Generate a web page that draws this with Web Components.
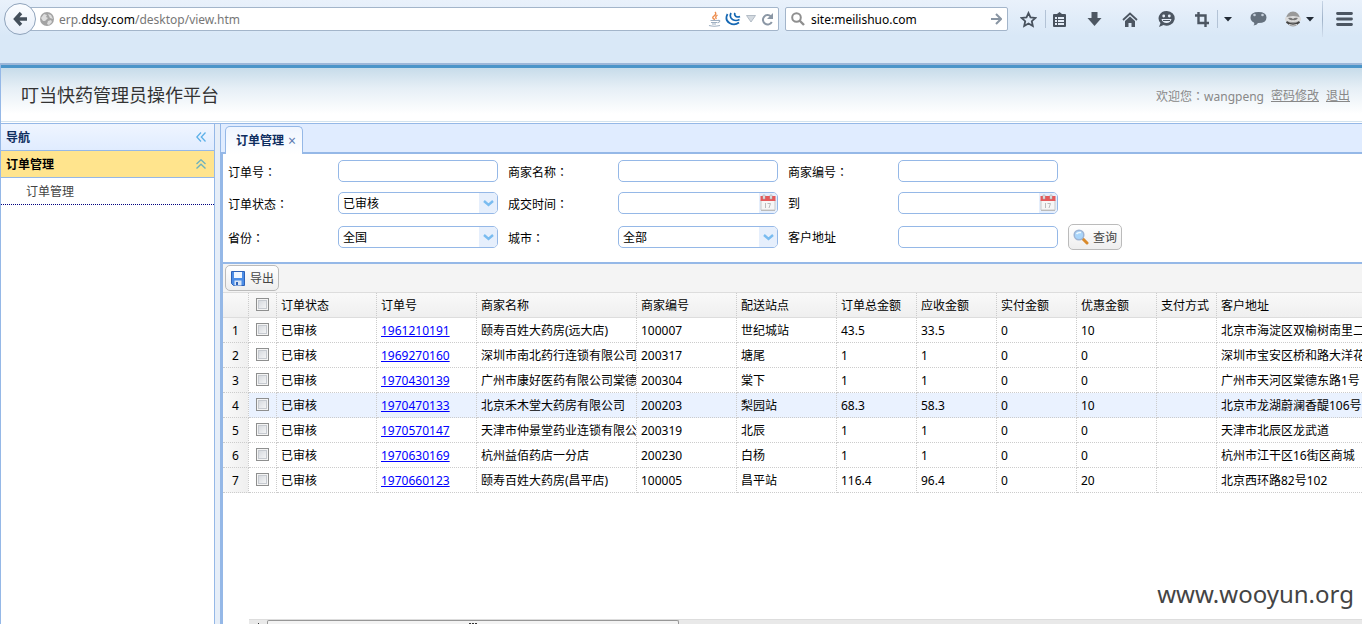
<!DOCTYPE html>
<html lang="zh-CN">
<head>
<meta charset="utf-8">
<title>叮当快药管理员操作平台</title>
<style>
html, body { height: 100%; margin: 0; }
body {
  font: 12px/16px "Noto Sans", "Noto Sans CJK SC", sans-serif;
  color: #000;
  background: #fff;
  overflow: hidden;
  --line: #95b8e7;
}
</style>
</head>
<body>
<desktop-page>
  <browser-bar slot="browser"></browser-bar>
  <page-header slot="header" heading="叮当快药管理员操作平台" user="wangpeng"></page-header>
  <nav-panel slot="nav"></nav-panel>
  <tab-panel slot="main" label="订单管理">
    <order-search></order-search>
    <order-grid></order-grid>
  </tab-panel>
  <site-mark slot="mark">www.wooyun.org</site-mark>
</desktop-page>

<script>
const define = (name, render) => customElements.define(name, class extends HTMLElement {
  connectedCallback() {
    if (this.shadowRoot) return;
    this.attachShadow({ mode: 'open' }).innerHTML = render(this);
  }
});

/* Shell: browser bar, header, sidebar and main column */
define('desktop-page', () => `
<style>
  :host { display: flex; flex-direction: column; height: 100vh; position: relative; overflow: hidden; }
  .app { flex: 1; min-height: 0; display: flex; flex-direction: column; border-left: 1px solid var(--line); }
  .body { flex: 1; min-height: 0; display: grid; grid-template-columns: 213px 7px minmax(0, 1fr); border-top: 1px solid var(--line); }
  .split { background: #e6eef8; border: solid var(--line); border-width: 0 1px; box-sizing: border-box; }
</style>
<slot name="browser"></slot>
<div class="app">
  <slot name="header"></slot>
  <div class="body"><slot name="nav"></slot><div class="split"></div><slot name="main"></slot></div>
</div>
<slot name="mark"></slot>`);

const ICONS = {
  back: '<svg width="14" height="16" viewBox="0 0 14 16"><path d="M8 2 2.5 8 8 14M3 8h11" fill="none" stroke="#444f5b" stroke-width="3.4"/></svg>',
  globe: '<svg width="14" height="14" viewBox="0 0 14 14"><circle cx="7" cy="7" r="7" fill="#a3a3a3"/><path d="M1 6 4 2l3 1-1 2 2 1-3 3-2 0zM8 2l3 1 2 4-3-1zM8 9l3-1 1 2-3 3-2-1z" fill="#ddd"/></svg>',
  java: '<svg width="14" height="16" viewBox="0 0 14 16"><path d="M7 1q2 2-1 4t1 3.5M9.5 4q-3 2-1 4" fill="none" stroke="#ed8c4c" stroke-width="1.4"/><path d="M2.500 9.500h7M3 11.500h6M4 13h4M9.500 9.500q3-.5 2 1t-2 1M1 14.500q5 1.500 11 0" fill="none" stroke="#9fb0c2" stroke-width="1.200"/></svg>',
  swirl: '<svg width="16" height="14" viewBox="0 0 16 14"><path d="M2.500 2q-3 6 2 9 5 3 9.500-.5M6 1Q4 5 7.500 7.500q3.500 2 7 0M10 1Q9 3 11 4.500q2 1 4 0" fill="none" stroke="#1467b3" stroke-width="1.700"/></svg>',
  drop: '<svg width="10" height="8" viewBox="0 0 10 8"><path d="M.5.5h9L5 7z" fill="#d4dae0" stroke="#b3bcc6"/></svg>',
  reload: '<svg width="13" height="13" viewBox="0 0 13 13"><path d="M10 3.500A4.700 4.700 0 1 0 10.800 9" fill="none" stroke="#8b97a5" stroke-width="2"/><path d="M12 0v6H6z" fill="#8b97a5"/></svg>',
  find: '<svg width="14" height="14" viewBox="0 0 14 14"><circle cx="5.500" cy="5.500" r="4.300" fill="none" stroke="#8f8f8f" stroke-width="2"/><path d="m8.500 8.500 4.500 4.500" stroke="#8f8f8f" stroke-width="2.400"/></svg>',
  go: '<svg width="11" height="12" viewBox="0 0 11 12"><path d="m5 1 5 5-5 5M0 6h9" fill="none" stroke="#8995a3" stroke-width="2"/></svg>',
  star: '<svg width="17" height="17" viewBox="0 0 17 17"><path d="m8.500 2 2 4.400 4.900.5-3.600 3.300 1 4.800-4.300-2.500L4.200 15l1-4.800L1.600 6.900l4.900-.5z" fill="none" stroke="#48525e" stroke-width="1.800"/></svg>',
  list: '<svg width="15" height="15" viewBox="0 0 15 15"><path d="M1 3q0-1 1-1h3l2.500-2L10 2h3q1 0 1 1v11q0 1-1 1H2q-1 0-1-1z" fill="#48525e"/><path d="M3 5h2v2H3zm3 0h6v2H6zM3 8h2v2H3zm3 0h6v2H6zM3 11h2v2H3zm3 0h6v2H6z" fill="#e4edf8"/></svg>',
  down: '<svg width="15" height="14" viewBox="0 0 15 14"><path d="M4.500 0h6v6h4l-7 8-7-8h4z" fill="#4c5662"/></svg>',
  home: '<svg width="16" height="15" viewBox="0 0 16 15"><path d="m1 8 7-6.500L15 8" fill="none" stroke="#4c5662" stroke-width="1.800"/><path d="m3 9 5-4.500L13 9v6h-3.500v-4h-3v4H3z" fill="#4c5662"/></svg>',
  smile: '<svg width="17" height="16" viewBox="0 0 17 16"><path d="M8.500 0a8 7.300 0 1 1-3 14L1 16l1.500-4A8 7.300 0 0 1 8.500 0" fill="#4c5662"/><circle cx="5.700" cy="5" r="1.400" fill="#e4edf8"/><circle cx="11.300" cy="5" r="1.400" fill="#e4edf8"/><path d="M3.500 8h10q-1 4-5 4t-5-4" fill="#e4edf8"/><path d="M5 9.500h7" stroke="#4c5662"/></svg>',
  crop: '<svg width="14" height="15" viewBox="0 0 14 15"><path d="M3.500 0v11H14M0 3.500h10.500V15" fill="none" stroke="#4c5662" stroke-width="2.400"/></svg>',
  caret: '<svg width="8" height="5" viewBox="0 0 8 5"><path d="M0 0h8L4 4.600z" fill="#222b36"/></svg>',
  bubble: '<svg width="17" height="14" viewBox="0 0 17 14"><path d="M8.500 0q8 0 8 5.500t-8 5.500H8q-1 2-4.500 2.500Q5 12 4 10.500.500 9 .500 5.500.500 0 8.500 0" fill="#65717e"/><circle cx="4.500" cy="3" r="1.300" fill="#c6d0dc"/><circle cx="12.500" cy="3" r="1.300" fill="#c6d0dc"/></svg>',
  ninja: '<svg width="16" height="16" viewBox="0 0 16 16"><ellipse cx="8" cy="8" rx="7" ry="7.500" fill="#999"/><path d="M0 6.500q8-3 16 0v3q-8 3-16 0z" fill="#dcdcdc"/><path d="M3 7q3-1 5 1 2-2 5-1-2 3-5 2-3 1-5-2" fill="#777"/><path d="M1.500 11q6.500 5 13 0" fill="none" stroke="#444" stroke-width="2"/><path d="M4 13.500q4 1.500 8 0" fill="none" stroke="#ddd"/></svg>',
  menu: '<svg width="17" height="14" viewBox="0 0 17 14"><path d="M1.500 1.500h14M1.500 7h14M1.500 12.500h14" stroke="#4c5662" stroke-width="2.800" stroke-linecap="round"/></svg>',
  calendar: '<svg width="16" height="18" viewBox="0 0 16 18"><path d="M1 6h14v10H1z" fill="#f6f6f6" stroke="#c9c9c9"/><path d="M.5 2h15v5H.5z" fill="#e5595a"/><path d="M3 1h2v4H3zm7 0h2v4h-2z" fill="#eee" stroke="#aaa" stroke-width=".6"/><path d="M5.500 9v5M7.500 9.500h3l-1.500 4.500" fill="none" stroke="#bbb"/><path d="M1 16.500h14" stroke="#bbb"/></svg>',
  chevron: '<svg width="11" height="7" viewBox="0 0 11 7"><path d="m1 1 4.500 4L10 1" fill="none" stroke="#7abcf0" stroke-width="2.400"/></svg>',
  search: '<svg width="16" height="16" viewBox="0 0 16 16"><path d="m10 10 4 4" stroke="#d98a2b" stroke-width="3" stroke-linecap="round"/><circle cx="6" cy="6" r="4.800" fill="#a9d5fa" stroke="#9db4d4" stroke-width="1.500"/><path d="M3.500 5Q5 3 8 3.500" stroke="#eef8ff" stroke-width="1.500" fill="none"/></svg>',
  save: '<svg width="14" height="15" viewBox="0 0 14 15"><path d="M.5.5h13v14h-11l-2-2z" fill="#4c8de6" stroke="#2e62b8"/><path d="M3 1h8v6H3z" fill="#f1f7ff"/><path d="M3.500 9.500h7v5h-7z" fill="#dbe6f5"/><path d="M5 11h2v3H5z" fill="#2e62b8"/></svg>',
  left2: '<svg width="10" height="10" viewBox="0 0 10 10"><path d="M5 .5.8 5 5 9.500M9.500.5 5.300 5l4.200 4.500" fill="none" stroke="#5cb0e8" stroke-width="1.300"/></svg>',
  up2: '<svg width="10" height="10" viewBox="0 0 10 10"><path d="M.5 5 5 .8 9.500 5M.5 9.500 5 5.300l4.500 4.200" fill="none" stroke="#6fb2bd" stroke-width="1.400"/></svg>'
};
define('glyph-icon', el => `<style>:host{display:inline-flex;flex:none}svg{display:block}</style>${ICONS[el.getAttribute('name')]}`);
const icon = name => `<glyph-icon name="${name}"></glyph-icon>`;
const reset = 'button{font:inherit;color:inherit;border:0;padding:0;margin:0;background:none;display:flex;align-items:center;justify-content:center}';
const colon = '<span class="colon" lang="zh-TW">：</span>';
const colonStyle = '.colon{font-family:"Noto Sans CJK TC",sans-serif}';

/* Browser toolbar */
define('browser-bar', () => `
<style>
  ${reset}
  :host { display: flex; align-items: flex-start; height: 63px; flex: none; border-bottom: 2px solid #9db7d9;
    background: linear-gradient(#e9f1fb, #d9e8f7 36px); }
  .address { flex: 1; display: flex; align-items: center; margin-right: 6px; height: 38px; padding-left: 4px; }
  .back { width: 32px; height: 32px; box-sizing: border-box; border: 1px solid #8fa3bb; border-radius: 50%;
    background: linear-gradient(#fbfdff, #e6eef9); z-index: 1; }
  .box { display: flex; align-items: center; gap: 6px; box-sizing: border-box; height: 24px; padding: 0 5px;
    background: #fff; border: 1px solid #a3b5ca; border-radius: 2px; }
  .url { flex: 1; margin-left: -8px; padding: 0 4px 0 11px; gap: 5px; }
  .plugins { display: flex; align-items: center; gap: 3px; }
  .text { flex: 1; line-height: 20px; padding-top: 1px; color: #777; white-space: nowrap; outline: 0; }
  .text b { font-weight: 400; color: #000; }
  .find { flex: 0 0 222px; margin-top: 7px; }
  input { flex: 1; min-width: 0; border: 0; padding: 2px 0 0; outline: 0; background: none; color: #000; font: inherit; line-height: 20px; }
  .tools { display: grid; height: 38px; align-items: center; margin-left: 4px;
    grid-template-columns: 33px 1px 27px 42px 30px 42px 30px 1px 19px 43px 26px 16px 1px 39px; }
  .tools .start { justify-content: flex-start; }
  .tools i { height: 18px; background: #b3c3d6; }
  .tools i.tall { height: 36px; background: linear-gradient(#c7d5e6, #9fb2c8, #d3e0ef); }
  .menu { padding-left: 4px; }
</style>
<div class="address">
  <button class="back" aria-label="后退">${icon('back')}</button>
  <div class="box url">${icon('globe')}
    <div class="text" role="textbox" contenteditable="true" aria-label="地址" spellcheck="false">erp.<b>ddsy.com</b>/desktop/view.htm</div>
    <span class="plugins">${icon('java')}${icon('swirl')}</span><button aria-label="历史">${icon('drop')}</button><button aria-label="刷新">${icon('reload')}</button>
  </div>
</div>
<div class="box find">${icon('find')}<input aria-label="搜索" value="site:meilishuo.com"><button aria-label="前往">${icon('go')}</button></div>
<div class="tools">
  <button aria-label="收藏">${icon('star')}</button><i></i>
  <button aria-label="书签">${icon('list')}</button>
  <button aria-label="下载">${icon('down')}</button>
  <button aria-label="主页">${icon('home')}</button>
  <button aria-label="聊天">${icon('smile')}</button>
  <button aria-label="截图">${icon('crop')}</button><i></i>
  <button aria-label="截图选项">${icon('caret')}</button>
  <button aria-label="消息">${icon('bubble')}</button>
  <button aria-label="代理">${icon('ninja')}</button>
  <button class="start" aria-label="代理选项">${icon('caret')}</button><i class="tall"></i>
  <button class="menu" aria-label="菜单">${icon('menu')}</button>
</div>`);

/* Platform header */
define('page-header', el => `
<style>
  :host { display: flex; align-items: center; justify-content: space-between; box-sizing: border-box; height: 58px; flex: none;
    padding: 0 12px 0 20px; border-top: 3px solid #4b95c9; border-bottom: 1px solid #fff;
    background: linear-gradient(#c7dcea, #e6eff6 20px, #fff 46px); box-shadow: inset 0 -1px #d3e3ee; }
  h1 { margin: 0; font-size: 18px; line-height: 24px; font-weight: 400; color: #333; }
  p { margin: 0; padding-top: 2px; display: flex; gap: 7px; color: #888; }
  a { color: inherit; }
  ${colonStyle}
</style>
<h1>${el.getAttribute('heading')}</h1>
<p><span>欢迎您${colon}${el.getAttribute('user')}</span><a href="#password">密码修改</a><a href="#logout">退出</a></p>`);

/* Sidebar accordion */
define('nav-panel', () => `
<style>
  ${reset}
  :host { display: block; background: #fff; }
  .bar { display: flex; align-items: center; justify-content: space-between; box-sizing: border-box; width: 100%; height: 27px;
    padding: 0 8px 0 5px; border-bottom: 1px solid var(--line); font-weight: 700; }
  .bar span { padding-top: 2px; }
  h2 { margin: 0; font-size: 12px; color: #0e2d5f; background: linear-gradient(#eff5ff, #e0ecff); }
  .group { background: #ffe48d; color: #000; }
  a { display: block; height: 25px; line-height: 25px; padding: 1px 0 0 25px; color: #444; text-decoration: none; border-bottom: 1px dotted #000080; }
</style>
<h2 class="bar"><span>导航</span><button aria-label="收起导航">${icon('left2')}</button></h2>
<button class="bar group" aria-expanded="true"><span>订单管理</span>${icon('up2')}</button>
<nav><a href="#orders">订单管理</a></nav>`);

/* Tab strip with the open tab's content slotted in */
define('tab-panel', el => `
<style>
  ${reset}
  :host { display: flex; flex-direction: column; min-width: 0; min-height: 0; }
  .strip { display: flex; align-items: flex-end; height: 30px; flex: none; box-sizing: border-box; padding-left: 4px;
    background: #e0ecff; box-shadow: inset 0 -2px var(--line); }
  .tab { display: flex; align-items: center; gap: 4px; box-sizing: border-box; height: 28px; padding: 0 6px 0 10px;
    border: 1px solid var(--line); border-bottom: 0; border-radius: 5px 5px 0 0; background: linear-gradient(#eff5ff, #fff);
    color: #0e2d5f; font-weight: 700; }
  .tab button { width: 8px; font-weight: 400; font-size: 14px; color: #5d7bb0; }
  .content { flex: 1; min-height: 0; display: flex; flex-direction: column; border-left: 2px solid var(--line); }
</style>
<div class="strip"><div class="tab"><span>${el.getAttribute('label')}</span><button aria-label="关闭">×</button></div></div>
<div class="content"><slot></slot></div>`);

/* Icon + text push button */
define('tool-button', el => `
<style>
  ${reset}
  :host { display: inline-block; }
  button { box-sizing: border-box; height: 26px; padding: 0 4px; gap: 4px; color: #444; white-space: nowrap;
    border: 1px solid #bbb; border-radius: 5px; background: linear-gradient(#fff, #eee); }
  glyph-icon { width: 16px; justify-content: center; }
  span { padding-top: 2px; }
</style>
<button>${icon(el.getAttribute('icon'))}<span><slot></slot></span></button>`);

/* Label with a text box, drop-down or date box */
define('form-field', el => {
  const kind = el.getAttribute('kind'), value = el.getAttribute('value') || '';
  const label = el.getAttribute('label').replace('：', colon);
  return `
<style>
  ${reset}
  :host { display: grid; grid-template-columns: 110px 160px; align-items: center; }
  ${colonStyle}
  label { padding-top: 2px; }
  .box { display: flex; box-sizing: border-box; height: 22px; border: 1px solid var(--line); border-radius: 5px; overflow: hidden;
    background: #fff; position: relative; }
  .box > :first-child { flex: 1; min-width: 0; border: 0; margin: 0; padding: 2px 4px 0; outline: 0; background: none; color: #000; font: inherit; appearance: none; }
  .end { display: flex; align-items: center; justify-content: center; width: 18px; background: #e6effc; }
  .over { position: absolute; right: 0; top: 0; bottom: 0; pointer-events: none; }
</style>
<label for="field">${label}</label>
<div class="box">${
  kind === 'select' ? `<select id="field"><option>${value}</option></select><span class="end over">${icon('chevron')}</span>`
  : kind === 'date' ? `<input id="field"><button class="end" type="button" aria-label="选择日期">${icon('calendar')}</button>`
  : `<input id="field">`}</div>`;
});

/* Order filter form */
define('order-search', () => `
<style>
  :host { display: block; flex: none; border-bottom: 2px solid var(--line); }
  form { display: grid; grid-template-columns: repeat(3, 270px) auto; justify-content: start; align-items: center; gap: 10px; padding: 6px 5px 12px; }
  .first { grid-column: 1; }
</style>
<form>
  <form-field label="订单号："></form-field>
  <form-field label="商家名称："></form-field>
  <form-field label="商家编号："></form-field>
  <form-field class="first" label="订单状态：" kind="select" value="已审核"></form-field>
  <form-field label="成交时间：" kind="date"></form-field>
  <form-field label="到" kind="date"></form-field>
  <form-field class="first" label="省份：" kind="select" value="全国"></form-field>
  <form-field label="城市：" kind="select" value="全部"></form-field>
  <form-field label="客户地址"></form-field>
  <tool-button icon="search">查询</tool-button>
</form>`);

/* Order list */
const COLUMNS = [['订单状态', 100], ['订单号', 100], ['商家名称', 160], ['商家编号', 100], ['配送站点', 100], ['订单总金额', 80],
  ['应收金额', 80], ['实付金额', 80], ['优惠金额', 80], ['支付方式', 60], ['客户地址', 0]];
const ORDERS = [
  ['已审核', '1961210191', '颐寿百姓大药房(远大店)', '100007', '世纪城站', '43.5', '33.5', '0', '10', '', '北京市海淀区双榆树南里二'],
  ['已审核', '1969270160', '深圳市南北药行连锁有限公司', '200317', '塘尾', '1', '1', '0', '0', '', '深圳市宝安区桥和路大洋花'],
  ['已审核', '1970430139', '广州市康好医药有限公司棠德', '200304', '棠下', '1', '1', '0', '0', '', '广州市天河区棠德东路1号'],
  ['已审核', '1970470133', '北京禾木堂大药房有限公司', '200203', '梨园站', '68.3', '58.3', '0', '10', '', '北京市龙湖蔚澜香醍106号'],
  ['已审核', '1970570147', '天津市仲景堂药业连锁有限公', '200319', '北辰', '1', '1', '0', '0', '', '天津市北辰区龙武道'],
  ['已审核', '1970630169', '杭州益佰药店一分店', '200230', '白杨', '1', '1', '0', '0', '', '杭州市江干区16街区商城'],
  ['已审核', '1970660123', '颐寿百姓大药房(昌平店)', '100005', '昌平站', '116.4', '96.4', '0', '20', '', '北京西环路82号102']
];
define('order-grid', () => `
<style>
  :host { display: flex; flex-direction: column; flex: 1; min-height: 0; }
  .bar { display: flex; align-items: center; height: 28px; flex: none; padding-left: 2px; background: #f4f4f4; border-bottom: 1px solid #ddd; }
  .view { flex: 1; min-height: 0; overflow: hidden; }
  table { width: 100%; table-layout: fixed; border-collapse: separate; border-spacing: 0; }
  th, td { box-sizing: border-box; height: 25px; padding: 2px 0 0 4px; border: dotted #ccc; border-width: 0 1px 1px 0;
    font-weight: 400; text-align: left; white-space: nowrap; overflow: hidden; }
  thead th { background: linear-gradient(#f9f9f9, #efefef); border-bottom: 1px solid #ddd; }
  tbody th { padding-left: 0; text-align: center; background: linear-gradient(90deg, #f9f9f9, #efefef); }
  tr > :last-child { border-right: 0; }
  tr.over td { background: #eaf2ff; }
  tr > .tick { padding: 0 0 1px; }
  .tick input { display: block; margin: 0 auto; appearance: none; width: 13px; height: 13px; box-sizing: border-box; border: 1px solid #8e8f8f;
    background: linear-gradient(135deg, #cfd3d9, #fbfbfb); box-shadow: inset 0 0 0 1px #f4f4f4, inset 0 0 0 2px #c6cad0; }
  a { color: #00f; }
  .scroll { flex: none; display: flex; height: 5px; margin-left: 26px; overflow: hidden; background: #e9e9e9; box-sizing: border-box; border-top: 1px solid #ddd; }
  .less { width: 18px; display: flex; align-items: flex-end; justify-content: center; }
  .less::after { content: ""; width: 1px; height: 1px; background: #333; }
  .thumb { flex: 0 0 37%; box-sizing: border-box; border: 1px solid #979797; border-bottom: 0; border-radius: 2px 2px 0 0; background: #f3f3f3;
    display: flex; align-items: flex-end; justify-content: center; }
  .thumb::after { content: ""; width: 8px; height: 1px; background: repeating-linear-gradient(90deg, #333 0 2px, #f3f3f3 2px 3px); }
</style>
<div class="bar"><tool-button icon="save">导出</tool-button></div>
<div class="view"><table>
  <colgroup><col style="width:26px"><col style="width:28px">${COLUMNS.map(c => c[1] ? `<col style="width:${c[1]}px">` : '<col>').join('')}</colgroup>
  <thead><tr><th></th><th class="tick"><input type="checkbox" aria-label="全选"></th>${COLUMNS.map(c => `<th scope="col">${c[0]}</th>`).join('')}</tr></thead>
  <tbody>${ORDERS.map((r, i) => `<tr${i === 3 ? ' class="over"' : ''}><th scope="row">${i + 1}</th><td class="tick"><input type="checkbox" aria-label="选择 ${r[1]}"></td>${
    r.map((v, c) => `<td>${c === 1 ? `<a href="#${v}">${v}</a>` : v}</td>`).join('')}</tr>`).join('')}</tbody>
</table></div>
<div class="scroll"><span class="less"></span><span class="thumb"></span></div>`);

/* Corner mark laid over the page */
define('site-mark', () => `
<style>
  :host { position: absolute; right: 8px; bottom: 14px; font: 24px/32px "Noto Sans", sans-serif; color: #444; pointer-events: none; }
</style><slot></slot>`);
</script>
</body>
</html>
